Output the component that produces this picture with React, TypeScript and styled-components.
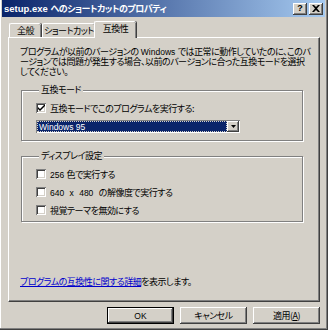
import React from "react";
import styled, { createGlobalStyle } from "styled-components";

const FONT = `"Noto Sans CJK JP", "Liberation Sans", sans-serif`;

const Global = createGlobalStyle`
  html, body { margin: 0; padding: 0; background: #d4d0c8; }
  body {
    font-family: ${FONT};
    font-size: 9px;
    letter-spacing: -0.5px;
    font-feature-settings: "palt";
    color: #000;
  }
  #root { width: 328px; height: 330px; }
  * { box-sizing: border-box; }
`;

const Latin = styled.span<{ $size?: number; $wordGap?: number }>`
  font-family: "Liberation Sans", sans-serif;
  font-size: ${(p) => p.$size ?? 8.5}px;
  letter-spacing: 0;
  word-spacing: ${(p) => p.$wordGap ?? 0}px;
`;

const Window = styled.div`
  width: 328px;
  height: 330px;
  background: #d4d0c8;
  padding: 0 3px 3px 2px;
  box-shadow: inset -1px -1px #404040, inset -2px -2px #808080, inset 1px 0 #ffffff;
  display: flex;
  flex-direction: column;
`;

const TitleBar = styled.div`
  height: 17px;
  flex: none;
  display: flex;
  align-items: center;
  padding: 0 2px 0 2px;
  background: linear-gradient(to right, #0a246a, #a6caf0);
  color: #fff;
  font-weight: bold;
  white-space: nowrap;
`;

const TitleText = styled.span`
  flex: 1;
`;

const CaptionButtons = styled.div`
  display: flex;
  gap: 2px;
`;

const CaptionButton = styled.div`
  width: 14px;
  height: 12px;
  background: #d4d0c8;
  box-shadow: inset -1px -1px #404040, inset 1px 1px #ffffff, inset -2px -2px #808080;
  display: flex;
  align-items: center;
  justify-content: center;
  color: #000;
  font-family: "Liberation Sans", sans-serif;
  font-weight: bold;
  font-size: 9px;
  letter-spacing: 0;
  line-height: 1;
`;

const Body = styled.div`
  flex: 1;
  display: flex;
  flex-direction: column;
  padding: 4px 5px 0 6px;
`;

const TabStrip = styled.div`
  display: flex;
  align-items: flex-end;
  height: 16px;
  padding-left: 1px;
  position: relative;
  z-index: 1;
`;

const Tab = styled.div<{ $active?: boolean; $w: number }>`
  width: ${(p) => p.$w}px;
  background: #d4d0c8;
  white-space: nowrap;
  line-height: 12px;
  border-top: 1px solid #fff;
  border-left: 1px solid #fff;
  border-top-left-radius: 2px;
  border-top-right-radius: 2px;
  box-shadow: inset -1px 0 #808080, 1px 0 #404040;
  display: flex;
  align-items: center;
  justify-content: center;
  ${(p) =>
    p.$active
      ? `
    height: 17px;
    margin: 0 -1px -1px -2px;
    padding-bottom: 2px;
    position: relative;
    z-index: 2;
  `
      : `
    height: 14px;
    margin-right: 1px;
  `}
`;

const Panel = styled.div`
  width: 312px;
  height: 265px;
  border-top: 1px solid #fff;
  border-left: 1px solid #fff;
  border-right: 1px solid #404040;
  border-bottom: 1px solid #404040;
  box-shadow: inset -1px -1px #808080;
  display: flex;
  flex-direction: column;
  padding: 9px 0 14px 11px;
`;

const Desc = styled.div`
  line-height: 10px;
  white-space: nowrap;
`;

const Group = styled.fieldset<{ $gapTop: number; $padTop: number; $padBottom: number }>`
  margin: ${(p) => p.$gapTop}px 0 0 1px;
  width: 282px;
  padding: ${(p) => p.$padTop}px 0 ${(p) => p.$padBottom}px 14px;
  border: 1px solid #808080;
  box-shadow: inset 1px 1px #fff, 1px 1px #fff;
  display: flex;
  flex-direction: column;
  gap: 6px;
  min-width: 0;
`;

const Legend = styled.legend`
  margin-left: 3px;
  padding: 0 2px;
  line-height: 10px;
  background: #d4d0c8;
  white-space: nowrap;
`;

const Row = styled.label`
  display: flex;
  align-items: center;
  gap: 4px;
  height: 12px;
  white-space: nowrap;
`;

const Box = styled.span`
  width: 10px;
  height: 10px;
  flex: none;
  background: #fff;
  box-shadow: inset 1px 1px #808080, inset -1px -1px #ffffff, inset 2px 2px #404040, inset -2px -2px #d4d0c8;
  display: flex;
  align-items: center;
  justify-content: center;
`;

const Select = styled.div`
  width: 204px;
  height: 13px;
  display: flex;
  background: #fff;
  padding: 1px;
  box-shadow: inset 1px 1px #808080, inset -1px -1px #ffffff;
`;

const SelectValue = styled.div`
  flex: 1;
  background: #0a246a;
  color: #fff;
  outline: 1px dotted #d4d0c8;
  outline-offset: -1px;
  line-height: 11px;
  padding-left: 2px;
  white-space: nowrap;
`;

const DropButton = styled.div`
  width: 12px;
  background: #d4d0c8;
  box-shadow: inset -1px -1px #404040, inset 1px 1px #ffffff, inset -2px -2px #808080;
  display: flex;
  align-items: center;
  justify-content: center;
`;

const LinkLine = styled.div`
  margin-top: auto;
  line-height: 10px;
  white-space: nowrap;
`;

const Link = styled.span`
  color: #0000cc;
  text-decoration: underline;
`;

const ButtonRow = styled.div`
  display: flex;
  justify-content: flex-end;
  gap: 6px;
  margin-top: 5px;
`;

const Button = styled.div<{ $default?: boolean }>`
  width: 67px;
  height: 17px;
  display: flex;
  align-items: center;
  justify-content: center;
  white-space: nowrap;
  background: #d4d0c8;
  ${(p) =>
    p.$default
      ? `box-shadow: inset 0 0 0 1px #000, inset -2px -2px #404040, inset 2px 2px #ffffff, inset -3px -3px #808080;`
      : `box-shadow: inset -1px -1px #404040, inset 1px 1px #ffffff, inset -2px -2px #808080;`}
`;

const Check = () => (
  <svg width="7" height="7" viewBox="0 0 7 7">
    <path d="M0 2 L0 4 L2 6 L7 1 L7 -1 L2 4 Z" fill="#000" />
  </svg>
);

const Arrow = () => (
  <svg width="5" height="3" viewBox="0 0 5 3">
    <path d="M0 0 H5 L2.5 3 Z" fill="#000" />
  </svg>
);

const CloseGlyph = () => (
  <svg width="8" height="7" viewBox="0 0 8 7">
    <path d="M0 0 L2 0 L4 2 L6 0 L8 0 L5 3.5 L8 7 L6 7 L4 5 L2 7 L0 7 L3 3.5 Z" fill="#000" />
  </svg>
);

export default function App() {
  return (
    <>
      <Global />
      <Window>
        <TitleBar>
          <TitleText>
            <Latin $size={9.5}>setup.exe </Latin>へのショートカットのプロパティ
          </TitleText>
          <CaptionButtons>
            <CaptionButton>?</CaptionButton>
            <CaptionButton>
              <CloseGlyph />
            </CaptionButton>
          </CaptionButtons>
        </TitleBar>
        <Body>
          <TabStrip>
            <Tab $w={32}>全般</Tab>
            <Tab $w={53}>ショートカット</Tab>
            <Tab $w={42} $active>
              互換性
            </Tab>
          </TabStrip>
          <Panel>
            <Desc>
              プログラムが以前のバージョンの<Latin> Windows </Latin>では正常に動作していたのに、このバ
              <br />
              ージョンでは問題が発生する場合、以前のバージョンに合った互換モードを選択
              <br />
              してください。
            </Desc>
            <Group $gapTop={8} $padTop={7} $padBottom={7}>
              <Legend>互換モード</Legend>
              <Row>
                <Box>
                  <Check />
                </Box>
                互換モードでこのプログラムを実行する:
              </Row>
              <Select>
                <SelectValue>
                  <Latin>Windows 95</Latin>
                </SelectValue>
                <DropButton>
                  <Arrow />
                </DropButton>
              </Select>
            </Group>
            <Group $gapTop={10} $padTop={7} $padBottom={5}>
              <Legend>ディスプレイ設定</Legend>
              <Row>
                <Box />
                <span>
                  <Latin>256 </Latin>色で実行する
                </span>
              </Row>
              <Row>
                <Box />
                <span>
                  <Latin $wordGap={3}>640 x 480 </Latin>の解像度で実行する
                </span>
              </Row>
              <Row>
                <Box />
                視覚テーマを無効にする
              </Row>
            </Group>
            <LinkLine>
              <Link>プログラムの互換性に関する詳細</Link>を表示します。
            </LinkLine>
          </Panel>
          <ButtonRow>
            <Button $default>
              <Latin>OK</Latin>
            </Button>
            <Button>キャンセル</Button>
            <Button>
              <span>
                適用(<u>A</u>)
              </span>
            </Button>
          </ButtonRow>
        </Body>
      </Window>
    </>
  );
}
